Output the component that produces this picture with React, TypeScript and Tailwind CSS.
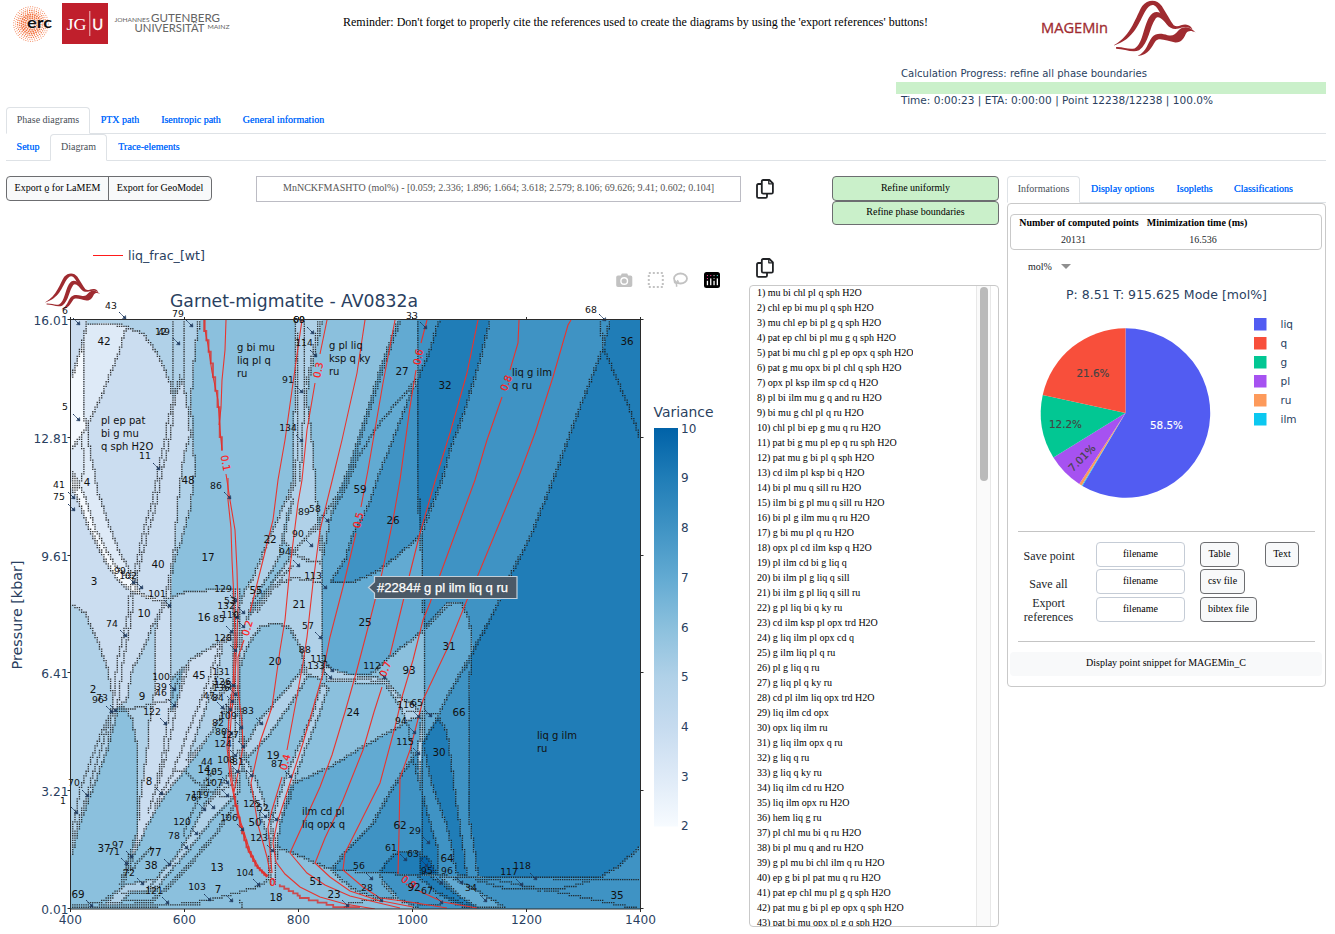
import React from "react";

type Pt = [number, number];

const V: Record<number, string> = {
  2: "#f4f9fe",
  3: "#deeaf7",
  4: "#cbddf0",
  5: "#b0d1e8",
  6: "#8bc0dd",
  7: "#62aad2",
  8: "#3f93c4",
  9: "#207db7",
  10: "#0464aa",
};

const GX = 570 / 256;
const GY = 590 / 256;

function parse(s: string): Pt[] {
  return s.split(" ").map((p) => p.split(",").map(Number) as Pt);
}

/* Walks a polyline over the computation grid and lists the nodes it passes */
function gridNodes(pts: Pt[], close = false): Pt[] {
  const list = close ? [...pts, pts[0]] : pts;
  const out: Pt[] = [];
  let li = NaN;
  let lj = NaN;
  for (let s = 0; s < list.length - 1; s++) {
    const [x0, y0] = list[s];
    const [x1, y1] = list[s + 1];
    const n = Math.max(1, Math.ceil(Math.hypot(x1 - x0, y1 - y0)));
    for (let k = 0; k <= n; k++) {
      const i = Math.round((x0 + ((x1 - x0) * k) / n - 70.5) / GX);
      const j = Math.round((y0 + ((y1 - y0) * k) / n - 319.5) / GY);
      if (i === li && j === lj) continue;
      if (!Number.isNaN(li) && i !== li && j !== lj) out.push([i, lj]);
      out.push([i, j]);
      li = i;
      lj = j;
    }
  }
  return out;
}

function stair(pts: Pt[]): string {
  return gridNodes(pts)
    .map(([i, j], k) => `${k ? "L" : "M"}${(70.5 + i * GX).toFixed(2)} ${(319.5 + j * GY).toFixed(2)}`)
    .join("");
}

/* One small square per distinct boundary node */
function dots(lines: [string, boolean][]): string {
  const seen = new Set<string>();
  const out: string[] = [];
  for (const [s, close] of lines) {
    for (const [i, j] of gridNodes(parse(s), close)) {
      const key = `${i},${j}`;
      if (seen.has(key) || i <= 0 || j <= 0 || i >= 256 || j >= 256) continue;
      seen.add(key);
      out.push(`M${(69.85 + i * GX).toFixed(2)} ${(318.85 + j * GY).toFixed(2)}h1.35v1.35h-1.35z`);
    }
  }
  return out.join("");
}

const regions: [number, string][] = [
  [4, "70,320 200,320 195,350 191,400 193,440 195,470 190,510 180,545 172,567 171,600 171,700 112,713 70,850"],
  [5, "87,320 199,320 195,350 191,400 193,440 195,470 190,510 180,545 172,567 165,600 170,573 174,550 178,500 181,475 184,455 190,435 188,410 183,380 173,400 170,383 160,358 145,335 128,327 105,323 87,325"],
  [4, "70,320 87,320 86,328 82,345 76,365 71,378"],
  [2, "71,378 76,365 82,345 84,345 83,413 87,427 75,445 70,450"],
  [3, "87,325 105,323 122,325 126,327 120,350 110,375 100,400 87,427 83,413 83,340"],
  [2, "70,450 75,445 87,427 82,435 84,470 78,490 71,470"],
  [3, "70,450 87,427 90,453 94,470 97,490 107,520 117,547 130,573 140,593 130,590 118,580 105,560 90,530 78,500 70,475"],
  [2, "70,485 78,500 90,530 105,560 118,580 130,590 150,599 165,602 157,600 140,593 130,573 126,577 112,560 96,530 84,495 75,475"],
  [5, "70,604 85,613 97,640 108,670 113,700 112,713 100,737 90,763 80,790 73,827 70,847"],
  [5, "163,603 160,613 152,627 143,650 132,670 127,700 118,707 112,713 125,708 132,720 137,745 138,790 138,830 136,845 140,800 147,750 150,715 155,690 155,633 160,613"],
  [5, "165,600 185,592 210,590 235,590 237,630 222,641 210,648 190,660 175,685 171,700 171,610"],
  [4, "155,633 160,613 165,602 171,610 171,700 175,685 190,660 210,648 222,641 235,630 235,690 222,715 205,742 185,770 165,795 150,820 135,852 131,855 136,840 140,800 147,750 150,715 155,690"],
  [5, "217,673 223,643 236,636 236,700 222,715 205,742 187,760 193,743 207,703"],
  [6, "171,680 183,668 178,700 171,712"],
  [6, "112,713 118,707 125,708 132,720 137,745 138,790 138,830 133,845 131,860 120,890 100,903 70,905 70,853 80,823 87,803 97,777 107,750"],
  [5, "112,710 100,737 90,763 80,790 73,827 70,847 70,860 80,823 87,803 97,777 107,750 117,713"],
  [5, "233,770 205,805 190,835 175,858 160,875 148,890 156,890 168,873 182,858 200,835 218,812 240,790"],
  [5, "105,905 115,893 125,885 155,879 148,890 130,892 118,905"],
  [5, "232,590 240,590 241,640 240,700 244,750 238,790 230,770 228,720 234,690"],
  [5, "295,320 322,320 313,363 308,383 307,403 312,440 315,480 318,523 322,560 322,680 305,673 305,663 300,647 290,628 277,623 260,627 247,647 239,670 238,610 245,590 253,577 267,543 287,497 293,480 295,373"],
  [6, "287,515 293,500 283,540 293,553 262,600 250,615 246,622 253,600 278,560"],
  [5, "293,553 304,540 320,525 323,563 308,560"],
  [6, "239,670 247,647 260,627 277,623 290,628 300,647 305,663 300,673 280,697 260,720 243,750 238,710"],
  [5, "305,665 300,673 280,697 260,720 243,750 247,757 267,737 293,700 308,675"],
  [5, "238,750 250,767 260,790 268,813 277,850 275,880 268,880 271,840 262,820 250,785"],
  [5, "322,683 313,713 290,767 277,803 270,830 277,847 280,823 290,797 297,770 318,717 328,688"],
  [5, "322,660 332,669 352,675 372,677 385,679 400,697 414,705 422,717 422,790 417,775 412,750 408,725 400,705 385,683 328,682"],
  [7, "398,320 418,320 417,380 412,390 390,447 378,477 367,510 353,533 345,560 330,583 350,583 370,575 390,562 410,545 421,535 424,603 424,630 390,657 370,675 352,675 332,669 322,665 322,560 330,520 337,497 347,473 363,423 383,360"],
  [8, "417,320 439,320 430,350 418,378"],
  [8, "417,384 412,390 390,447 378,477 367,510 353,533 345,560 330,583 350,583 370,575 390,562 410,545 421,535 419,500 417,470"],
  [9, "439,320 490,320 480,360 465,410 450,450 442,480 420,535 417,470 417,380 430,350"],
  [8, "490,320 600,320 603,348 580,407 553,480 530,537 513,570 500,600 473,653 471,630 468,617 463,605 458,602 447,603 424,630 421,535 442,480 450,450 465,410 480,360"],
  [9, "610,320 640,320 640,909 478,876 473,840 468,810 469,700 471,653 500,600 513,570 530,537 553,480 580,407 603,348"],
  [8, "600,320 610,320 603,348"],
  [7, "424,630 447,605 458,602 463,605 468,617 471,630 471,658 447,697 438,717 424,743"],
  [8, "471,655 447,697 438,717 447,733 455,793 463,847 467,877 478,877 473,840 468,810 469,700"],
  [7, "422,717 410,720 393,730 363,747 330,767 297,782 290,787 280,823 277,847 290,852 313,862 332,870 347,850 373,823 393,787 418,750"],
  [8, "418,750 393,787 373,823 347,850 332,870 380,873 467,877 456,873 452,847 445,820 433,787 425,753 422,743 420,790"],
  [9, "438,717 447,733 455,793 463,847 467,877 456,873 452,847 445,820 433,787 425,753 422,743"],
  [9, "422,793 430,823 437,847 438,875 421,873"],
  [9, "398,852 420,852 420,875 380,873 385,863"],
  [10, "420,857 427,857 436,873 420,875"],
  [8, "456,877 500,878 640,879 640,909 420,909 400,900 382,880 380,873"],
  [8, "475,880 503,888 540,890 570,887 600,877 620,865 640,846 640,879 500,877"],
  [7, "332,870 380,873 382,882 395,898 380,899 362,893 348,885"],
  [9, "418,876 430,876 445,886 462,898 480,909 462,906 440,895"],
  [7, "440,877 452,877 475,890 505,908 480,908 462,898"],
];

const extra: string[] = [
  "174,320 174,350 173,400 168,420 165,440 158,470 152,503 143,533 135,570 130,593 127,620 117,663 115,687 112,710",
  "180,375 175,395 172,425 168,450 162,470 157,503 148,533 140,565 134,593 131,620 123,663 120,687 117,710",
  "184,320 183,380",
  "417,320 417,470 419,500 422,570 424,603 424,710 422,720 422,850",
  "417,380 395,405 375,430 357,460 345,490 330,515",
  "401,320 386,360 366,423 350,473 341,497",
  "603,348 615,375 630,410 640,440",
  "170,600 171,700 167,725 162,760 155,790",
  "188,668 178,700 172,730 165,760 158,785 148,812",
  "220,645 205,690 187,735 172,775 155,805",
  "296,320 298,373 297,440 296,480 289,500",
  "305,320 305,373 303,430 300,480",
  "319,320 311,363 306,383",
  "250,610 267,593 280,583 293,578 320,582",
  "254,606 270,585 288,560",
  "257,612 275,585 293,565",
  "293,553 304,560 322,563",
  "337,497 318,523 304,540 293,553",
  "100,905 180,904 210,900 235,893 255,888 268,880",
  "240,900 242,909",
  "70,907 160,906 200,904",
  "110,905 150,903 165,890 190,865 215,835 235,805",
  "108,902 152,900 168,886 192,861 217,831 237,801",
  "122,893 145,893 160,885",
  "175,770 185,772 200,785 215,795 230,797",
  "205,805 220,790 232,785",
  "195,800 205,780 215,770",
  "183,835 192,812 200,795 212,780",
  "212,700 225,690 234,684",
  "236,590 236,700 233,760",
  "240,590 239,700 241,745",
  "272,840 272,885",
  "276,840 275,885",
  "270,840 270,880",
  "322,560 322,680",
  "330,678 385,681 402,700",
  "395,898 410,903 440,906",
  "380,899 350,903 345,908",
  "407,712 440,713",
  "133,845 120,885",
  "137,848 125,880",
  "131,870 150,848",
  "440,893 458,902 474,908",
];

const isolines: string[] = [
  "205,320 205,330 208,345 212,372 218,400 220,430 222,450",
  "226,320 225,350 222,380 221,408 219,425",
  "228,478 228,500 231,528 232,560 234,600 235,640 233,685 229,717 227,747 230,777 234,797 240,823 248,850 257,867 267,877",
  "226,474 230,500 235,530 237,570 238,610 236,660 234,690 231,720 229,750 232,780 235,800 241,823 250,851 259,868 268,876",
  "302,320 293,383 285,440 278,480 273,520 263,560 253,600 250,612",
  "244,640 238,657 238,690 242,723 243,747 238,773 234,792",
  "327,320 320,354",
  "315,383 307,430 302,480 298,503 290,567 285,620 280,650 272,707 260,742 251,783 258,825 267,857 270,873",
  "365,320 357,373 342,440 334,473 320,530 313,583 307,637 303,663 295,707 287,750",
  "282,777 272,810 268,827 272,873",
  "395,320 383,383 368,470 361,507",
  "356,533 343,587 330,637 322,677 303,743 290,783 277,823 273,843 276,862 285,874 300,887 320,897 345,904 375,909",
  "427,320 421,343",
  "416,370 410,407 400,480 393,520 382,573 370,620 355,677 345,712 332,755 320,787 290,853 307,873 325,885 350,896 400,908",
  "478,320 467,373 450,433 436,478 420,533 410,573 390,655",
  "382,687 374,712 363,750 343,800 325,838 315,863 330,877 350,891 377,900 413,907",
  "519,320 518,343 510,370",
  "502,397 487,440 475,480 440,575 430,603 423,620 413,660 402,697 395,727 380,783 360,823 345,853 343,870 363,887 380,898 410,902 447,908",
  "571,320 568,325 553,377 535,433 519,476 478,575 467,600 448,647 423,700 410,750 400,778 399,833 398,874",
  "417,890 443,902 477,908",
];

const thickIso = [
  "280,885 300,897 333,906 360,908",
  "205,320 205,330 209,347 213,372 218,400 220,430 222,450",
  "234,797 240,823 248,850 257,867 267,877",
];

const isoLabels: [string, number, number, number][] = [
  ["0.1", 226, 463, 80],
  ["0.2", 247, 628, -72],
  ["0.3", 318, 370, -78],
  ["0.4", 285, 762, -75],
  ["0.5", 358, 520, -76],
  ["0.6", 418, 357, -78],
  ["0.7", 385, 669, -70],
  ["0.8", 506, 383, -70],
];

const big =
  "42,104,341 27,402,371 32,445,385 36,627,341 59,360,489 26,393,520 4,87,482 17,208,557 40,158,564 3,94,581 16,204,617 10,144,613 21,299,604 20,275,661 93,409,670 25,365,622 31,449,646 2,93,689 9,142,696 45,199,675 24,353,712 66,459,712 30,439,752 8,149,781 19,273,755 50,255,822 37,104,848 38,151,865 13,217,867 69,78,894 18,276,897 51,316,881 23,334,894 62,400,825 64,447,858 92,414,887 35,617,895 55,256,590 22,270,539 48,188,480 77,155,852 14,204,769 7,218,889";
const small =
  "43,111,306 6,65,311 79,178,314 12,161,332 49,164,332 60,299,320 69,299,320 114,304,343 91,288,380 134,288,428 33,412,316 68,591,310 5,65,407 11,145,456 86,216,486 41,59,485 75,59,497 89,304,512 58,315,509 90,298,534 94,285,552 113,313,576 99,120,571 102,128,576 101,157,594 129,223,589 53,230,601 132,226,606 85,219,619 110,230,615 57,308,626 74,112,624 128,223,638 88,305,650 111,319,659 133,316,666 112,372,666 96,98,700 73,102,698 100,161,677 39,161,687 46,161,693 122,152,712 131,221,672 126,222,682 135,223,685 136,221,688 47,209,696 84,218,698 109,228,716 82,218,723 80,221,732 127,230,735 124,223,744 83,248,711 44,207,762 108,226,760 81,238,762 105,214,772 107,214,783 76,191,798 119,200,795 87,277,764 116,406,705 65,417,703 94,401,721 115,405,742 70,74,783 1,63,801 120,182,822 78,174,836 106,229,818 125,252,804 52,263,808 123,259,838 71,114,852 97,118,845 72,129,873 104,245,873 103,197,887 121,154,891 28,367,888 56,359,866 29,415,831 61,391,848 63,413,854 96,447,871 95,427,871 67,427,891 34,471,888 117,509,872 118,522,866";

const arrows = parse(
  "80,325 126,319 193,327 180,345 314,334 317,357 303,393 303,442 80,421 160,470 427,329 606,321 75,499 75,511 231,499 329,522 313,547 300,567 135,584 143,589 171,607 327,589 237,602 245,614 239,619 245,628 233,633 237,652 127,637 322,639 334,672 332,679 176,691 176,707 113,713 117,712 167,725 263,725 243,729 224,709 233,735 245,748 237,757 253,777 239,773 292,778 89,797 78,814 163,795 229,784 229,797 206,811 215,809 198,835 188,849 171,866 133,858 128,865 144,885 93,907 169,904 211,901 233,902 260,886 244,831 267,818 278,821 274,852 420,718 432,717 416,734 420,755 430,844 407,861 428,867 373,880 383,902 443,884 443,904 463,884 487,902 523,886 537,880 349,907 235,687 237,696 234,703 232,711 386,679"
);

const fieldNames: [string[], number, number][] = [
  [["g bi mu", "liq pl q", "ru"], 237, 351],
  [["g pl liq", "ksp q ky", "ru"], 329, 349],
  [["liq g ilm", "q ru"], 512, 376],
  [["pl ep pat", "bi g mu", "q sph H2O"], 101, 424],
  [["liq g ilm", "ru"], 537, 739],
  [["ilm cd pl", "liq opx q"], 302, 815],
];

const phases = [
  "mu bi chl pl q sph H2O", "chl ep bi mu pl q sph H2O", "mu chl ep bi pl g q sph H2O", "pat ep chl bi pl mu g q sph H2O",
  "pat bi mu chl g pl ep opx q sph H2O", "pat g mu opx bi pl chl q sph H2O", "opx pl ksp ilm sp cd q H2O", "pl bi ilm mu g q and ru H2O",
  "bi mu g chl pl q ru H2O", "chl pl bi ep g mu q ru H2O", "pat bi g mu pl ep q ru sph H2O", "pat mu g bi pl q sph H2O",
  "cd ilm pl ksp bi q H2O", "bi pl mu q sill ru H2O", "ilm bi g pl mu q sill ru H2O", "bi pl g ilm mu q ru H2O",
  "g bi mu pl q ru H2O", "opx pl cd ilm ksp q H2O", "pl ilm cd bi g liq q", "bi ilm pl g liq q sill", "bi ilm g pl liq q sill ru",
  "g pl liq bi q ky ru", "cd ilm ksp pl opx trd H2O", "g liq ilm pl opx cd q", "g ilm liq pl q ru", "pl g liq q ru",
  "g liq pl q ky ru", "cd pl ilm liq opx trd H2O", "liq ilm cd opx", "opx liq ilm ru", "g liq ilm opx q ru", "g liq q ru",
  "g liq q ky ru", "liq ilm cd ru H2O", "liq ilm opx ru H2O", "hem liq g ru", "pl chl mu bi q ru H2O", "bi pl mu q and ru H2O",
  "g pl mu bi chl ilm q ru H2O", "ep g bi pl pat mu q ru H2O", "pat ep chl mu pl g q sph H2O", "pat mu g bi pl ep opx q sph H2O",
  "pat bi mu opx pl g q sph H2O",
];

const serif = "font-['Liberation_Serif',serif]";
const sans = "font-['DejaVu_Sans',sans-serif]";
const AXIS = "#2a3f5f";

function WavePaths() {
  return (
    <g fill="#9f2b30">
      <path d="M987 136 C1032 108 1045 45 1060 18 C1074 -2 1098 -4 1111 18 C1124 42 1133 62 1142 76 C1155 86 1165 68 1180 76 C1186 78 1190 85 1191 89 C1180 79 1165 82 1155 86 C1143 90 1132 86 1124 74 C1112 56 1106 32 1096 20 C1086 9 1076 18 1068 34 C1052 66 1040 118 987 137Z" />
      <path d="M992 142 C1012 141 1025 151 1040 146 C1062 132 1062 84 1078 52 C1088 32 1104 32 1114 46 L1130 76 C1118 68 1104 42 1095 56 C1078 84 1078 130 1052 152 C1034 161 1014 147 992 147Z" />
      <path d="M1049 168 C1072 157 1074 128 1086 112 C1096 98 1112 101 1126 106 C1150 112 1148 92 1164 84 C1178 79 1188 85 1199 98 C1188 92 1180 91 1174 101 C1168 116 1162 129 1146 128 C1126 125 1104 111 1095 124 C1084 142 1078 166 1049 169Z" />
    </g>
  );
}

function CopyIcon() {
  return (
    <svg width="18" height="20" viewBox="0 0 18 20" fill="none" stroke="#1f2124" strokeWidth="1.8" strokeLinejoin="round" className="block">
      <path d="M5.7 5H2.4Q1 5 1 6.4V17.4Q1 18.8 2.4 18.8H9.6Q11 18.8 11 17.4V15" />
      <path d="M7.2 1H13.4L16.9 4.400V13.300Q16.9 14.700 15.500 14.700H7.2Q5.8 14.700 5.8 13.300V2.400Q5.8 1 7.200 1Z" />
      <path d="M12.800 1.200V4.800H16.600" strokeWidth="1.300" />
    </svg>
  );
}

function ErcLogo() {
  const marks: React.ReactElement[] = [];
  for (let r = 4; r <= 19; r += 1.9) {
    const n = Math.round((2 * Math.PI * r) / 2.3);
    for (let i = 0; i < n; i++) {
      const a = (i / n) * 2 * Math.PI + r * 1.7;
      marks.push(
        <circle key={`${r}-${i}`} cx={20 + r * Math.cos(a)} cy={19 + r * Math.sin(a)} r={r > 15 ? 0.5 : r > 11 ? 0.7 : 0.9} fill="#f2703c" />
      );
    }
  }
  return (
    <svg width="44" height="40" viewBox="0 0 44 40" className="block">
      {marks}
      <text x="16" y="22.500" fontFamily="Lato, sans-serif" fontWeight="700" fontSize="15.500" textLength="25" lengthAdjust="spacingAndGlyphs" fill="#111" stroke="#fff" strokeWidth="1.500" paintOrder="stroke" strokeOpacity=".5">erc</text>
    </svg>
  );
}

function Tab({ active, children, w }: { active?: boolean; children: React.ReactNode; w: string }) {
  return (
    <div
      className={
        "flex h-[27px] items-center justify-center whitespace-nowrap rounded-t border pb-[2px] text-[10px] " +
        w +
        (active ? " border-[#dee2e6] border-b-white bg-white text-[#495057]" : " border-transparent text-[#0d6efd] [text-shadow:0_0_0.6px_#0d6efd]")
      }
    >
      {children}
    </div>
  );
}

function Diagram() {
  const yt: [string, number][] = [["16.01", 320], ["12.81", 438], ["9.61", 556], ["6.41", 673.5], ["3.21", 791.5], ["0.01", 909]];
  const xt = [400, 600, 800, 1000, 1200, 1400];
  const boundary = dots([
    ...regions.map(([, s]) => [s, true] as [string, boolean]),
    ...extra.map((s) => [s, false] as [string, boolean]),
  ]);
  return (
    <svg width="743" height="698" viewBox="6 236 743 698" className={"block " + sans}>
      <defs>
        <linearGradient id="variance" x1="0" x2="0" y1="1" y2="0">
          {[2, 3, 4, 5, 6, 7, 8, 9, 10].map((v) => (
            <stop key={v} offset={(v - 2) / 8} stopColor={v === 4 ? "#c6dbef" : v === 2 ? "#f7fbff" : v === 10 ? "#0062a8" : V[v]} />
          ))}
        </linearGradient>
        <clipPath id="plot">
          <rect x="70.5" y="319.5" width="570" height="589.5" />
        </clipPath>
      </defs>

      <line x1="93" x2="123" y1="255.500" y2="255.500" stroke="#ff1a1a" />
      <text x="128" y="260" fontSize="12.500" fill={AXIS} textLength="77" lengthAdjust="spacingAndGlyphs">liq_frac_[wt]</text>

      <g clipPath="url(#plot)">
        <rect x="70" y="319" width="571" height="591" fill={V[6]} />
        {regions.map(([v, s], i) => (
          <polygon key={i} points={s} fill={V[v]} />
        ))}
        <path d={boundary} fill="#1c1c1c" opacity=".88" />
        <g fill="none" stroke="#e8352f" strokeWidth="1.1">
          {isolines.map((s, i) => (
            <polyline key={i} points={s} />
          ))}
        </g>
        <g fill="none" stroke="#dc2f2c" strokeWidth="1.8" opacity=".8">
          {thickIso.map((s, i) => (
            <path key={i} d={stair(parse(s))} />
          ))}
        </g>
      </g>

      <svg x="44.5" y="273" width="56" height="37" viewBox="984 0 216 172" preserveAspectRatio="none">
        <WavePaths />
      </svg>

      <g fill="#ff1a1a" fontSize="10" textAnchor="middle" stroke="#ff1a1a" strokeWidth=".2">
        {isoLabels.map(([t, x, y, r]) => (
          <text key={t} transform={`translate(${x} ${y}) rotate(${r})`} y="3.8">{t}</text>
        ))}
        <text x="272.500" y="886">0</text>
        <text transform="translate(409 882) rotate(35)" y="3.800">0.9</text>
      </g>

      <g stroke="#1f3a5f" strokeWidth="1" fill="#1f3a5f">
        {arrows.map(([x, y], i) => (
          <g key={i}>
            <line x1={x - 7} y1={y - 7} x2={x - 1.5} y2={y - 1.5} strokeDasharray="1.5 .4" />
            <path d={`M${x} ${y}l-3.6 -.4l3.2 -3.2z`} strokeWidth=".4" />
          </g>
        ))}
      </g>

      <g fill="#111" textAnchor="middle" fontSize="10.400">
        {big.split(" ").map((s, i) => {
          const [t, x, y] = s.split(",");
          return <text key={i} x={+x} y={+y + 4}>{t}</text>;
        })}
      </g>
      <g fill="#111" textAnchor="middle" fontSize="9.300">
        {small.split(" ").map((s, i) => {
          const [t, x, y] = s.split(",");
          return <text key={i} x={+x} y={+y + 3.4}>{t}</text>;
        })}
      </g>
      <g fill="#111" fontSize="10">
        {fieldNames.map(([lines, x, y]) =>
          lines.map((l, i) => <text key={x + l} x={x} y={y + i * 13}>{l}</text>)
        )}
      </g>

      <g stroke="#2b2b2b" strokeWidth="1" fill="none">
        <rect x="70.500" y="319.500" width="570" height="589.500" />
        {yt.map(([t, y]) => (
          <path key={t} d={`M67.5 ${Math.floor(y) - 0.5}h3M640.5 ${Math.floor(y) - 0.5}h3`} />
        ))}
        {xt.map((t, i) => (
          <path key={t} d={`M${70.5 + i * 114} 317v2.5M${70.5 + i * 114} 909v3`} />
        ))}
      </g>
      <g fill={AXIS} fontSize="12.200">
        {yt.map(([t, y]) => (
          <text key={t} x="68.500" y={y + 4.5} textAnchor="end">{t}</text>
        ))}
        {xt.map((t, i) => (
          <text key={t} x={70.5 + i * 114} y="924" textAnchor="middle">{t}</text>
        ))}
        <text transform="translate(22 615) rotate(-90)" textAnchor="middle" fontSize="14" textLength="109" lengthAdjust="spacingAndGlyphs">Pressure [kbar]</text>
      </g>
      <text x="170" y="306.500" fontSize="17.600" fill={AXIS} textLength="248" lengthAdjust="spacingAndGlyphs">Garnet-migmatite - AV0832a</text>

      <g fill={AXIS}>
        <text x="653.500" y="417" fontSize="14" textLength="60" lengthAdjust="spacingAndGlyphs">Variance</text>
        <rect x="654" y="428" width="24" height="398.500" fill="url(#variance)" />
        {[10, 9, 8, 7, 6, 5, 4, 3, 2].map((v, i) => (
          <text key={v} x="681" y={432.7 + i * 49.7} fontSize="12">{v}</text>
        ))}
      </g>

      <g fill="#c2c2c2">
        <path d="M618 275.500q-1.800 0 -1.800 1.800v8q0 1.800 1.800 1.800h12.500q1.800 0 1.800-1.800v-8q0-1.800-1.800-1.800h-2.300l-1-2h-5.400l-1 2z" />
        <circle cx="624.200" cy="281" r="3.300" fill="none" stroke="#fff" strokeWidth="1.400" />
        <rect x="648.800" y="273" width="14" height="14" fill="none" stroke="#c2c2c2" strokeWidth="2" strokeDasharray="2 2" />
        <ellipse cx="680.500" cy="278.500" rx="6.500" ry="5" fill="none" stroke="#c2c2c2" strokeWidth="1.800" />
        <path d="M674.500 280.500q-.5 3 2.500 2.500q2.500-1 0-2.500M676 283q1 2 .5 3.700" fill="none" stroke="#c2c2c2" strokeWidth="1.500" />
      </g>
      <rect x="704" y="272" width="16" height="16" rx="2.500" fill="#000" />
      <g fill="#fff">
        <rect x="706.800" y="280.800" width="1.300" height="4.400" />
        <rect x="710.100" y="278.400" width="1.300" height="6.800" />
        <rect x="713.400" y="280.800" width="1.300" height="4.400" />
        <rect x="716.700" y="278.400" width="1.300" height="6.800" />
        <rect x="706.900" y="275" width="1.100" height="1.100" fill="#ef3f8d" />
        <rect x="710.200" y="275" width="1.100" height="1.100" fill="#ef3f8d" />
        <rect x="713.500" y="275" width="1.100" height="1.100" fill="#bbb" />
        <rect x="716.800" y="275" width="1.100" height="1.100" fill="#44d9c8" />
        <rect x="706.900" y="278" width="1.100" height="1.100" fill="#ef3f8d" />
        <rect x="713.500" y="278" width="1.100" height="1.100" fill="#bbb" />
      </g>

      <path d="M368.500 587.500L374.500 582V576.500H517V598.500H374.500V593Z" fill="#4b5966" stroke="#c3d0da" strokeWidth="1.200" />
      <text x="377" y="592" fontFamily="Liberation Sans, sans-serif" fontSize="12.500" fill="#fff" stroke="#fff" strokeWidth=".25" textLength="131" lengthAdjust="spacingAndGlyphs">#2284# g pl ilm liq q ru</text>
    </svg>
  );
}

function Pie() {
  const slices: [number, string][] = [
    [58.5, "#525cf2"], [0.14, "#0cc8f0"], [0.55, "#fd9a5b"], [7.01, "#a652f1"], [12.2, "#02c793"], [21.6, "#f84f3b"],
  ];
  let a = 0;
  const cx = 1125.5, cy = 413, r = 84.7;
  const legend: [string, string][] = [
    ["liq", "#525cf2"], ["q", "#f84f3b"], ["g", "#02c793"], ["pl", "#a652f1"], ["ru", "#fd9a5b"], ["ilm", "#0cc8f0"],
  ];
  return (
    <svg width="316" height="254" viewBox="1008 276 316 254" className={"block " + sans}>
      <text x="1066" y="299" fontSize="12.800" fill={AXIS} textLength="201" lengthAdjust="spacingAndGlyphs">P: 8.51 T: 915.625 Mode [mol%]</text>
      {slices.map(([v, c]) => {
        const a0 = a;
        a += (v / 100) * 2 * Math.PI;
        return (
          <path
            key={c}
            fill={c}
            d={`M${cx} ${cy}L${cx + r * Math.sin(a0)} ${cy - r * Math.cos(a0)}A${r} ${r} 0 ${a - a0 > Math.PI ? 1 : 0} 1 ${cx + r * Math.sin(a)} ${cy - r * Math.cos(a)}Z`}
          />
        );
      })}
      <g fontSize="10.400" textAnchor="middle" fill="#444" stroke="#444" strokeWidth=".15">
        <text x="1166.500" y="429" fill="#fff" stroke="#fff">58.5%</text>
        <text x="1093" y="377">21.6%</text>
        <text x="1065.500" y="428">12.2%</text>
        <text transform="translate(1082 458) rotate(-45)" y="3.500">7.01%</text>
      </g>
      {legend.map(([t, c], i) => (
        <g key={t}>
          <rect x="1254" y={318 + i * 19} width="12.500" height="12.500" fill={c} />
          <text x="1280.500" y={328 + i * 19} fontSize="10.500" fill={AXIS}>{t}</text>
        </g>
      ))}
    </svg>
  );
}

const fieldBox = "flex h-[25px] w-[89px] items-center justify-center rounded border border-[#c5ccd6] pb-[2px]";
const btn = "flex h-[25px] items-center justify-center rounded border border-[#6c6d70] bg-[#f8f9fa] pb-[2px] text-black";

export default function App() {
  return (
    <div className={"h-[934px] w-[1335px] overflow-hidden bg-white text-[10px] leading-[15px] text-[#212529] " + serif}>
      <header className="flex h-[107px] pl-[6px]">
        <div className="flex w-[300px] pt-[3px]">
          <div className="ml-[5px] mt-[2px] w-[44px] shrink-0"><ErcLogo /></div>
          <svg width="175" height="42" viewBox="0 0 175 42" className="ml-[7px] block shrink-0">
            <rect width="46" height="41" fill="#c01f2c" />
            <text x="4.500" y="26.500" fontFamily="Liberation Serif, serif" fontSize="17" fill="#fff" textLength="20" lengthAdjust="spacingAndGlyphs">JG</text>
            <rect x="27.300" y="8" width="1" height="25" fill="#eec3c6" />
            <text x="30.300" y="26.500" fontFamily="Lato, sans-serif" fontSize="16" fill="#fff" stroke="#fff" strokeWidth=".3" textLength="11" lengthAdjust="spacingAndGlyphs">U</text>
            <g fontFamily="Lato, sans-serif" fill="#636363">
              <text x="52.500" y="18.500" fontSize="6.400" textLength="35" lengthAdjust="spacingAndGlyphs">JOHANNES</text>
              <text x="89" y="19" fontSize="11.800" textLength="69" lengthAdjust="spacingAndGlyphs">GUTENBERG</text>
              <text x="72.500" y="29" fontSize="11.800" textLength="70" lengthAdjust="spacingAndGlyphs">UNIVERSITÄT</text>
              <text x="145.500" y="26" fontSize="6.400" textLength="22" lengthAdjust="spacingAndGlyphs">MAINZ</text>
            </g>
          </svg>
        </div>
        <p className="ml-[37px] mt-[13px] w-[553px] whitespace-nowrap text-[12px] text-black">
          <svg width="590" height="18" className="block">
            <text x="0" y="12.500" fontSize="12" textLength="585">Reminder: Don't forget to properly cite the references used to create the diagrams by using the 'export references' buttons!</text>
          </svg>
        </p>
        <div className={"w-[430px] " + sans}>
          <svg width="430" height="107" viewBox="896 0 430 107" className="block">
            <text x="1041" y="32.500" fontFamily="Open Sans, sans-serif" fontSize="14.300" fill="#a02b30" stroke="#a02b30" strokeWidth=".3" textLength="67" lengthAdjust="spacingAndGlyphs">MAGEMin</text>
            <svg x="1113" y="0" width="83" height="57" viewBox="984 0 216 172" preserveAspectRatio="none"><WavePaths /></svg>
            <text x="901" y="77" fontSize="10.400" fill={AXIS} textLength="246" lengthAdjust="spacingAndGlyphs">Calculation Progress: refine all phase boundaries</text>
            <rect x="896" y="82" width="430" height="12" fill="#caf0ca" />
            <text x="901" y="104" fontSize="10.400" fill={AXIS} textLength="312" lengthAdjust="spacingAndGlyphs">Time: 0:00:23 | ETA: 0:00:00 | Point 12238/12238 | 100.0%</text>
          </svg>
        </div>
      </header>

      <nav className="ml-[6px] flex h-[27px] w-[1320px] shadow-[inset_0_-1px_0_#dee2e6]">
        <Tab active w="w-[84px]">Phase diagrams</Tab>
        <Tab w="w-[60px]">PTX path</Tab>
        <Tab w="w-[82px]">Isentropic path</Tab>
        <Tab w="w-[103px]">General information</Tab>
      </nav>
      <nav className="ml-[6px] flex h-[27px] w-[1320px] shadow-[inset_0_-1px_0_#dee2e6]">
        <Tab w="w-[44px]">Setup</Tab>
        <Tab active w="w-[57px]">Diagram</Tab>
        <Tab w="w-[84px]">Trace-elements</Tab>
      </nav>

      <main className="flex h-[773px] pl-[6px] pt-[15px]">
        <section className="w-[743px]">
          <div className="flex h-[60px] items-start">
            <div className="flex h-[25px] w-[206px] rounded border border-[#6c6d70] bg-[#f8f9fa] text-black">
              <div className="flex w-[102px] items-center justify-center border-r border-[#6c6d70] pb-[2px]">Export ϱ for LaMEM</div>
              <div className="flex flex-1 items-center justify-center pb-[2px]">Export for GeoModel</div>
            </div>
            <div className="ml-[44px] flex h-[26px] w-[485px] items-center justify-center border border-[#bcbcc4] pb-[4px] text-[#555]">
              MnNCKFMASHTO (mol%) - [0.059; 2.336; 1.896; 1.664; 3.618; 2.579; 8.106; 69.626; 9.41; 0.602; 0.104]
            </div>
          </div>
          <Diagram />
        </section>

        <section className="w-[250px]">
          <div className="flex h-[82px]">
            <div className="w-[83px] pl-[7px] pt-[3px]"><CopyIcon /></div>
            <div className="w-[167px] text-black">
              <div className="flex h-[25px] items-center justify-center rounded border border-[#6c6d70] bg-[#caf0ca] pb-[2px]">Refine uniformly</div>
              <div className="flex h-[24px] items-center justify-center rounded border border-[#6c6d70] bg-[#caf0ca] pb-[3px]">Refine phase boundaries</div>
            </div>
          </div>
          <div className="pl-[7px]"><CopyIcon /></div>
          <div className="mt-[7px] flex h-[642px] justify-between rounded border border-[#c9c9c9] pr-[7px]">
            <ul className="-mt-[1px] h-[641px] overflow-hidden whitespace-nowrap pl-[7px] text-black">
              {phases.map((p, i) => (
                <li key={i} className="h-[15px]">{i + 1}) {p}</li>
              ))}
            </ul>
            <div className="flex w-[15px] justify-center border-x border-[#e8e8e8] bg-[#fafafa] pt-[1px]">
              <div className="h-[194px] w-[8px] rounded-full bg-[#bababa]" />
            </div>
          </div>
        </section>

        <section className="ml-[8px] w-[319px]">
          <nav className="flex h-[27px] shadow-[inset_0_-1px_0_#dee2e6]">
            <Tab active w="w-[73px]">Informations</Tab>
            <Tab w="w-[85px]">Display options</Tab>
            <Tab w="w-[59px]">Isopleths</Tab>
            <Tab w="w-[79px]">Classifications</Tab>
          </nav>
          <div className="h-[484px] rounded border border-[#c9c9c9] pt-[10px]">
            <div className="ml-[2px] flex h-[36px] w-[312px] rounded border border-[#c9c9c9] pl-[7px]">
              <div className="w-[122px] text-center">
                <b className="block text-black">Number of computed points</b>
                <span className="block pr-[11px] pt-[2px]">20131</span>
              </div>
              <div className="ml-[5px] w-[104px] text-center">
                <b className="block text-black">Minimization time (ms)</b>
                <span className="block pl-[12px] pt-[2px]">16.536</span>
              </div>
            </div>
            <div className="ml-[20px] flex h-[26px] items-center gap-[9px] pt-[7px]">
              <span>mol%</span>
              <span className="border-x-[5px] border-t-[5px] border-x-transparent border-t-[#8f8f8f]" />
            </div>
            <Pie />
            <div className="mx-[10px] mt-[1px] border-t border-[#c4c4c4]" />
            <div className="mt-[10px] flex h-[110px] text-black">
              <div className="ml-[2px] w-[77px] text-center text-[12px] leading-[14px] text-[#212529]">
                <p className="ml-[1px] pt-[7px]">Save point</p>
                <p className="pt-[14px]">Save all</p>
                <p className="pt-[5px]">Export references</p>
              </div>
              <div className="ml-[9px] flex flex-col">
                <div className={fieldBox}>filename</div>
                <div className={"mt-[2px] " + fieldBox}>filename</div>
                <div className={"mt-[3px] " + fieldBox}>filename</div>
              </div>
              <div className="ml-[15px] w-[65px]">
                <div className={"w-[39px] " + btn}>Table</div>
                <div className={"mt-[2px] w-[45px] " + btn}>csv file</div>
                <div className={"mt-[3px] w-[57px] " + btn}>bibtex file</div>
              </div>
              <div className={"w-[34px] " + btn}>Text</div>
            </div>
            <div className="mx-[10px] -mt-[11px] border-t border-[#c4c4c4]" />
            <div className="ml-[2px] mt-[10px] flex h-[24px] w-[312px] items-center justify-center rounded bg-[#f8f9fa] pb-[3px] text-black">
              Display point snippet for MAGEMin_C
            </div>
          </div>
        </section>
      </main>
    </div>
  );
}
